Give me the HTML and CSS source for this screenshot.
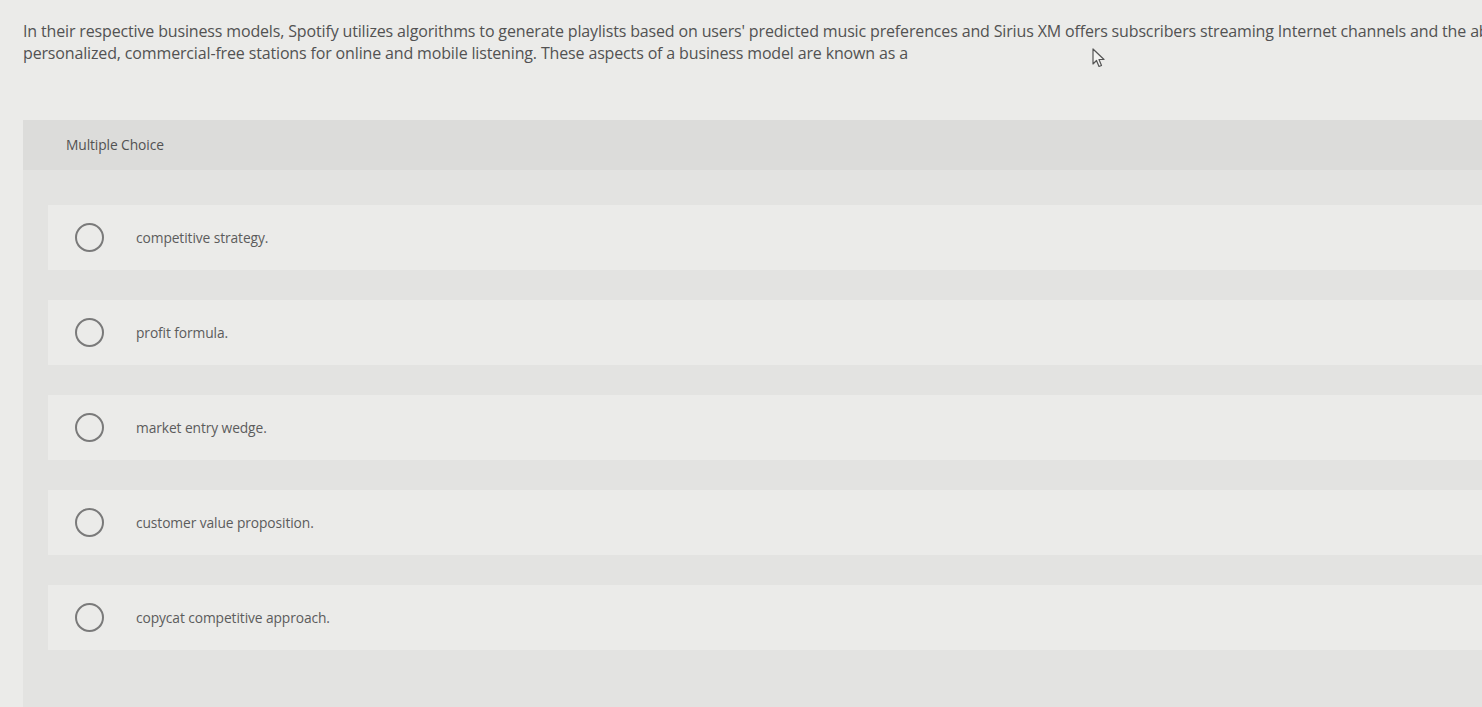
FILE: index.html
```html
<!DOCTYPE html>
<html>
<head>
<meta charset="utf-8">
<link rel="stylesheet" href="styles.css">
</head>
<body>
<div class="page">
  <div class="question">
    <span class="line">In their respective business models, Spotify utilizes algorithms to generate playlists based on users' predicted music preferences and Sirius XM offers subscribers streaming Internet channels and the ability to create</span>
    <span class="line">personalized, commercial-free stations for online and mobile listening. These aspects of a business model are known as a</span>
  </div>
  <div class="panel">
    <div class="panel-head">Multiple Choice</div>
    <div class="options">
      <div class="option"><span class="radio"></span><span class="label">competitive strategy.</span></div>
      <div class="option"><span class="radio"></span><span class="label">profit formula.</span></div>
      <div class="option"><span class="radio"></span><span class="label">market entry wedge.</span></div>
      <div class="option"><span class="radio"></span><span class="label">customer value proposition.</span></div>
      <div class="option"><span class="radio"></span><span class="label">copycat competitive approach.</span></div>
    </div>
  </div>
  <svg class="cursor" width="14" height="20" viewBox="0 0 14 20"><path d="M1 1 L1 16 L4.5 12.5 L7 18.5 L9.5 17.5 L7 11.5 L12 11.5 Z" fill="#f4f4f2" stroke="#555" stroke-width="1.2" stroke-linejoin="round"/></svg>
</div>
</body>
</html>
```
FILE: styles.css
```css
html, body {
  margin: 0;
  padding: 0;
  background: #ebebe9;
  overflow: hidden;
}
.page {
  position: relative;
  width: 1482px;
  height: 707px;
  overflow: hidden;
  font-family: "Open Sans", Lato, sans-serif;
}
.question {
  padding: 20px 0 0 23px;
  color: #525252;
  font-size: 16px;
  line-height: 22px;
  letter-spacing: -0.15px;
}
.line {
  display: block;
  white-space: nowrap;
}
.panel {
  margin: 56px 0 0 23px;
  background: #e3e3e1;
  height: 600px;
}
.panel-head {
  height: 48px;
  padding-bottom: 2px;
  display: flex;
  align-items: center;
  padding-left: 43px;
  background: #dcdcda;
  color: #525252;
  font-size: 13.8px;
  letter-spacing: -0.1px;
}
.options {
  padding: 35px 0 0 25px;
  display: flex;
  flex-direction: column;
  gap: 30px;
}
.option {
  height: 65px;
  background: #ebebe9;
  display: flex;
  align-items: center;
}
.radio {
  width: 25px;
  height: 25px;
  border: 2px solid #7a7a7a;
  border-radius: 50%;
  margin-left: 27px;
  flex: none;
}
.label {
  margin-left: 32px;
  color: #5c5c5c;
  font-size: 13.8px;
  letter-spacing: -0.1px;
}
.cursor {
  position: absolute;
  left: 1092px;
  top: 48px;
}
```
